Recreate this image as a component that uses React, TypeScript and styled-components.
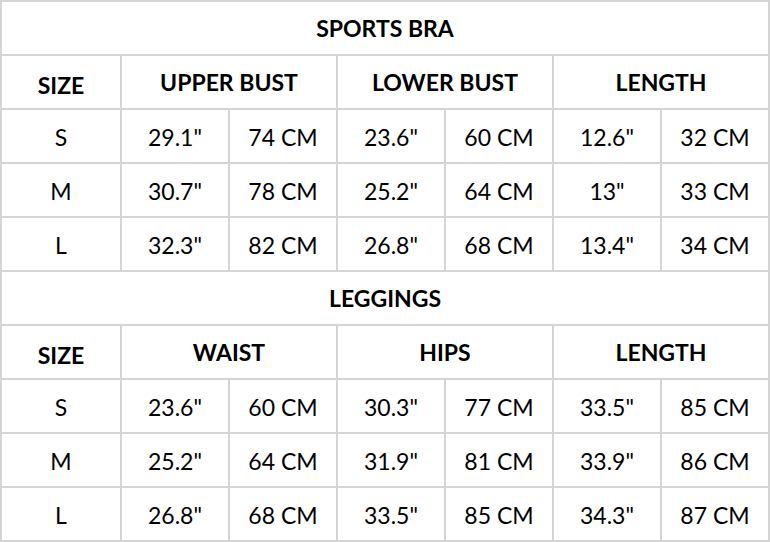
import React from "react";
import styled, { createGlobalStyle } from "styled-components";

const GlobalStyle = createGlobalStyle`
  html, body { margin: 0; padding: 0; background: #ffffff; }
  body { font-family: Lato, "Open Sans", sans-serif; color: #000; }
`;

const Table = styled.div`
  display: grid;
  grid-template-columns: 118px repeat(6, 106px);
  grid-auto-rows: 52px;
  gap: 2px;
  padding: 2px;
  width: 770px;
  box-sizing: border-box;
  background: #d4d4d4;
`;

const Cell = styled.div<{ $span?: number; $bold?: boolean; $drop?: number }>`
  background: #ffffff;
  display: flex;
  align-items: center;
  justify-content: center;
  grid-column: span ${(p) => p.$span ?? 1};
  font-size: 23px;
  font-weight: ${(p) => (p.$bold ? 700 : 400)};
  padding-top: ${(p) => p.$drop ?? 2}px;
  box-sizing: border-box;
  white-space: nowrap;
`;

type Section = {
  title: string;
  groups: string[];
  rows: { size: string; values: string[] }[];
};

const sections: Section[] = [
  {
    title: "SPORTS BRA",
    groups: ["UPPER BUST", "LOWER BUST", "LENGTH"],
    rows: [
      { size: "S", values: ['29.1"', "74 CM", '23.6"', "60 CM", '12.6"', "32 CM"] },
      { size: "M", values: ['30.7"', "78 CM", '25.2"', "64 CM", '13"', "33 CM"] },
      { size: "L", values: ['32.3"', "82 CM", '26.8"', "68 CM", '13.4"', "34 CM"] },
    ],
  },
  {
    title: "LEGGINGS",
    groups: ["WAIST", "HIPS", "LENGTH"],
    rows: [
      { size: "S", values: ['23.6"', "60 CM", '30.3"', "77 CM", '33.5"', "85 CM"] },
      { size: "M", values: ['25.2"', "64 CM", '31.9"', "81 CM", '33.9"', "86 CM"] },
      { size: "L", values: ['26.8"', "68 CM", '33.5"', "85 CM", '34.3"', "87 CM"] },
    ],
  },
];

export default function App() {
  return (
    <>
      <GlobalStyle />
      <Table>
        {sections.map((s) => (
          <React.Fragment key={s.title}>
            <Cell $span={7} $bold $drop={0}>
              {s.title}
            </Cell>
            <Cell $bold $drop={6}>
              SIZE
            </Cell>
            {s.groups.map((g) => (
              <Cell key={g} $span={2} $bold $drop={0}>
                {g}
              </Cell>
            ))}
            {s.rows.map((r) => (
              <React.Fragment key={r.size}>
                <Cell>{r.size}</Cell>
                {r.values.map((v, i) => (
                  <Cell key={i}>{v}</Cell>
                ))}
              </React.Fragment>
            ))}
          </React.Fragment>
        ))}
      </Table>
    </>
  );
}
